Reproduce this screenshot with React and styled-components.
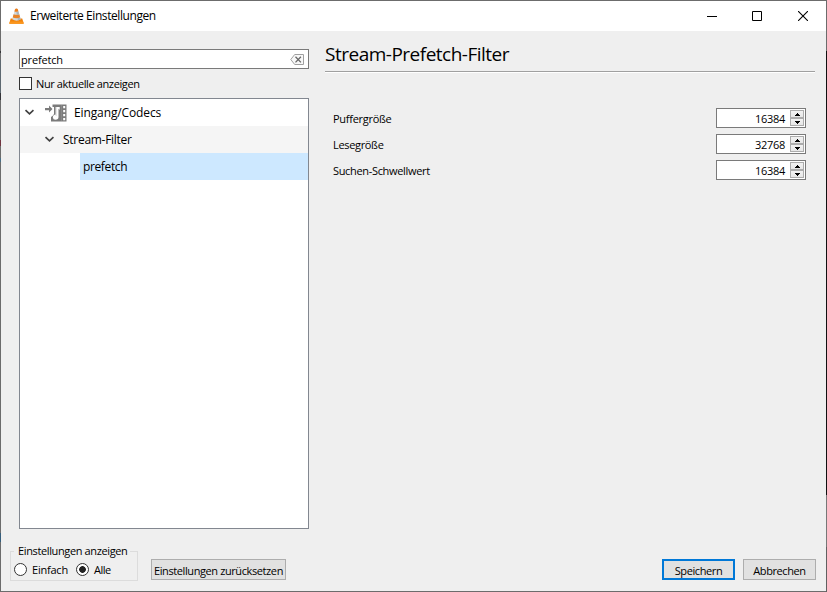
import React from 'react';
import styled, { createGlobalStyle } from 'styled-components';

const GlobalStyle = createGlobalStyle`
  * { box-sizing: border-box; }
  body { margin: 0; overflow: hidden; }
`;

const Window = styled.div`
  width: 827px;
  height: 592px;
  display: grid;
  grid-template-columns: 1px 1fr 1px;
  grid-template-rows: 1px 30px 1fr 1px;
  background: #6c6c6c;
  color: #000;
  font: 11px/14px 'Open Sans', 'Noto Sans', sans-serif;
  white-space: nowrap;
`;

const EdgeLeft = styled.div`
  grid-column: 1;
  grid-row: 1 / -1;
  background: linear-gradient(#6c6c6c 0 51px, #343438 51px 53px, #6c6c6c 53px 60px, #5d6870 60px 93px, #343438 93px 100px, #6c6c6c 100px 140px, #70333f 140px 146px, #6c6c6c 146px 158px, #4a6e84 158px 162px, #6c6c6c 162px 533px, #365e7c 533px 542px, #6c6c6c 542px);
`;

const EdgeRight = styled.div`
  grid-column: 3;
  grid-row: 1 / -1;
  background: linear-gradient(#6c6c6c 0 51px, #101010 51px 495px, #777 495px 547px, #606060 547px);
`;

const TitleBar = styled.header`
  grid-column: 2;
  grid-row: 2;
  display: flex;
  align-items: center;
  background: #fff;
  padding-left: 8px;
`;

const Label = styled.span`
  font-size: ${(p) => p.$size || 11}px;
  letter-spacing: ${(p) => p.$track}px;
`;

const WindowTitle = styled(Label)`
  flex: 1;
  margin-left: 6px;
  line-height: 16px;
`;

const Controls = styled.div`
  display: flex;
  height: 100%;
`;

const ControlButton = styled.button`
  width: ${(p) => p.$w}px;
  padding: 0 0 1px;
  border: 0;
  background: none;
  display: flex;
  align-items: center;
  justify-content: center;
`;

const Content = styled.main`
  grid-column: 2;
  grid-row: 3;
  background: #efefef;
  display: grid;
  grid-template-columns: 290px 490px;
  grid-template-rows: 480px auto;
  column-gap: 16px;
  padding: 18px 11px 0 18px;
`;

const Sidebar = styled.aside`
  display: flex;
  flex-direction: column;
`;

const SearchField = styled.div`
  height: 20px;
  border: 1px solid #7a7a7a;
  background: #fff;
  display: flex;
  align-items: center;
  justify-content: space-between;
  padding: 2px 4px 0 1px;
`;

const CheckRow = styled.label`
  display: flex;
  align-items: center;
  gap: 4px;
  height: 13px;
  margin: 8px 0;
`;

const CheckBox = styled.span`
  width: 13px;
  height: 13px;
  border: 1px solid #333;
  background: #fff;
`;

const Tree = styled.div`
  flex: 1;
  border: 1px solid #828790;
  background: #fff;
`;

const TreeRow = styled.div`
  height: 27px;
  display: flex;
  align-items: center;
  padding-left: ${(p) => p.$indent}px;
  background: ${(p) => (p.$alternate ? '#f5f5f5' : '#fff')};
`;

const Chevron = styled.svg`
  width: 10px;
  height: 7px;
  margin-right: ${(p) => p.$gap}px;
`;

const TreeLabel = styled(Label)`
  line-height: 16px;
`;

const Selected = styled.div`
  flex: 1;
  height: 100%;
  display: flex;
  align-items: center;
  padding: 1px 0 0 3px;
  background: #cde8ff;
`;

const CategoryIcon = styled.svg`
  width: 22px;
  height: 18px;
  margin-right: 7px;
`;

const Panel = styled.section`
  display: flex;
  flex-direction: column;
`;

const Heading = styled.h1`
  height: 23px;
  margin: 0 0 1px;
  border-bottom: 1px solid #a0a0a0;
  box-shadow: 0 1px #fff;
  font-size: 19px;
  font-weight: 400;
  line-height: 10px;
  letter-spacing: -0.5px;
`;

const Settings = styled.div`
  display: flex;
  flex-direction: column;
  gap: 6px;
  padding: 35px 9px 0 8px;
`;

const SettingRow = styled.div`
  display: flex;
  align-items: center;
  justify-content: space-between;
  height: 20px;
  line-height: 12px;
`;

const SettingLabel = styled(Label)`
  padding-top: 2px;
`;

const SpinBox = styled.div`
  width: 90px;
  height: 20px;
  border: 1px solid #7a7a7a;
  background: #fff;
  display: flex;
  align-items: center;
  justify-content: flex-end;
`;

const SpinValue = styled(Label)`
  padding: 2px 5px 0 0;
`;

const Steppers = styled.div`
  display: grid;
  grid-template-rows: 8px 8px;
  width: 15px;
  padding-right: 1px;
`;

const Stepper = styled.span`
  display: flex;
  align-items: center;
  justify-content: center;
  border: 1px solid #acacac;
  background: linear-gradient(#f2f2f2, #e7e7e7);
`;

const Footer = styled.footer`
  grid-column: 1 / -1;
  display: flex;
  align-items: flex-start;
  padding-top: 15px;
  margin: 0 -1px 0 -9px;
`;

const Group = styled.fieldset`
  width: 128px;
  height: 37px;
  margin: 0;
  padding: 0 0 0 3px;
  min-width: 0;
  border: 1px solid #dcdcdc;
`;

const Legend = styled.legend`
  padding: 0 2px 0 4px;
  height: 14px;
  line-height: 14px;
`;

const Radios = styled.div`
  display: flex;
  align-items: center;
  height: 13px;
  margin-top: 5px;
`;

const Radio = styled.span`
  width: 13px;
  height: 13px;
  margin-right: 5px;
  border: 1px solid #333;
  border-radius: 50%;
  background: ${(p) => (p.$on ? 'radial-gradient(circle, #222 0 3px, #fff 3.7px)' : '#fff')};
`;

const RadioLabel = styled(Label)`
  margin-right: 8px;
  padding-top: 1px;
`;

const Button = styled.button`
  width: ${(p) => p.$w}px;
  height: 21px;
  margin: 15px 0 0 ${(p) => p.$ml}px;
  padding: 2px 0 0;
  border: ${(p) => (p.$primary ? '2px solid #0078d7' : '1px solid #adadad')};
  background: #e1e1e1;
  color: #000;
  font: inherit;
  line-height: ${(p) => (p.$primary ? 14 : 16)}px;
  letter-spacing: -0.4px;
`;

const Spacer = styled.div`
  flex: 1;
`;

function Cone() {
  return (
    <svg width="15" height="16" viewBox="0 0 15 16">
      <path d="M1.7 10.5H13.2L14.7 15.2Q14.6 15.8 14 15.8H1Q.3 15.8.3 15.2Z" fill="#f0820c" />
      <path d="M1 13.4H14L14.7 15.2Q14.6 15.8 14 15.8H1Q.3 15.8.3 15.2Z" fill="#fb961c" />
      <path d="M6.1 1Q7.5-.1 8.7 1L11.7 11.3Q7.5 14 3.3 11.3Z" fill="#d3d9db" />
      <path d="M6.1 1Q7.5-.1 8.7 1L9.4 3.4Q7.5 4.3 5.4 3.4Z" fill="#ee7d19" />
      <path d="M4.6 6.2Q7.5 7.4 10.3 6.2L11.2 9.4Q7.5 10.9 3.7 9.4Z" fill="#e88327" />
      <path d="M7.3 3.9L9.5 3.5L10.3 6.2L8 6.9ZM8.4 10.2L11.2 9.4L11.7 11.3L9 12.5Z" fill="#aeb6bb" />
    </svg>
  );
}

function ClearIcon() {
  return (
    <svg width="14" height="12" viewBox="0 0 14 12">
      <path d="M4.7.5H13.5V10.5H4.7L.8 5.5Z" fill="#f8f8f8" stroke="#a0a0a0" />
      <path d="M5.5 2.8L10.9 8.4M10.9 2.8L5.5 8.4" stroke="#666" strokeWidth="1.3" />
    </svg>
  );
}

function CodecIcon() {
  return (
    <CategoryIcon viewBox="0 0 22 18">
      <path d="M0 4H4V1.6L7.5 5L4 8.4V6.2H0Z" fill="#7b7b7b" />
      <path
        fillRule="evenodd"
        d="M7.5 .5H21.5V17.5H6V13Q8.5 11.5 9 10V3H7.5ZM11 3V10.5Q8 10.8 7.8 13.2Q8 15.8 10.4 15.8Q13.5 15.6 13.5 13V4.8Q14.2 5 14.7 6V3ZM18.2 2V4.2H20.2V2ZM18.2 6V8.2H20.2V6ZM18.2 10V12.2H20.2V10ZM18.2 14V16.2H20.2V14Z"
        fill="#7b7b7b"
      />
      <path d="M10.5 3H12V12H10.5Z" fill="#e8e8e8" />
      <path d="M16.5 1V17" stroke="#8f8f8f" strokeWidth=".7" />
    </CategoryIcon>
  );
}

function Expander({ gap }) {
  return (
    <Chevron $gap={gap} viewBox="0 0 10 7">
      <path d="M1.5 1.1L5.5 4.8L9.5 1.1" fill="none" stroke="#404040" strokeWidth="1.7" />
    </Chevron>
  );
}

function Arrow({ down }) {
  return (
    <svg width="5" height="3" viewBox="0 0 5 3" shapeRendering="crispEdges">
      <path d={down ? 'M0 0H5V1H4V2H3V3H2V2H1V1H0Z' : 'M2 0H3V1H4V2H5V3H0V2H1V1H2Z'} />
    </svg>
  );
}

const settings = [
  { label: 'Puffergröße', track: -0.28, value: '16384' },
  { label: 'Lesegröße', track: -0.33, value: '32768' },
  { label: 'Suchen-Schwellwert', track: -0.33, value: '16384' },
];

export default function App() {
  return (
    <>
      <GlobalStyle />
      <Window>
        <EdgeLeft />
        <EdgeRight />
        <TitleBar>
          <Cone />
          <WindowTitle $size={12} $track={-0.42}>Erweiterte Einstellungen</WindowTitle>
          <Controls>
            <ControlButton $w={45} aria-label="Minimieren">
              <svg width="10" height="10"><path d="M0 5.5H10" stroke="#000" /></svg>
            </ControlButton>
            <ControlButton $w={45} aria-label="Maximieren">
              <svg width="10" height="10"><path d="M.5 .5H9.5V9.5H.5Z" fill="none" stroke="#000" /></svg>
            </ControlButton>
            <ControlButton $w={47} aria-label="Schließen">
              <svg width="10" height="10"><path d="M0 0L10 10M10 0L0 10" stroke="#000" strokeWidth="1.1" /></svg>
            </ControlButton>
          </Controls>
        </TitleBar>
        <Content>
          <Sidebar>
            <SearchField>
              <Label $track={-0.17}>prefetch</Label>
              <ClearIcon />
            </SearchField>
            <CheckRow>
              <CheckBox />
              <Label $track={-0.38}>Nur aktuelle anzeigen</Label>
            </CheckRow>
            <Tree>
              <TreeRow $indent={4}>
                <Expander gap={11} />
                <CodecIcon />
                <TreeLabel $size={12} $track={-0.12}>Eingang/Codecs</TreeLabel>
              </TreeRow>
              <TreeRow $indent={24} $alternate>
                <Expander gap={9} />
                <TreeLabel $size={12} $track={-0.28}>Stream-Filter</TreeLabel>
              </TreeRow>
              <TreeRow $indent={60}>
                <Selected>
                  <TreeLabel $size={12} $track={-0.37}>prefetch</TreeLabel>
                </Selected>
              </TreeRow>
            </Tree>
          </Sidebar>
          <Panel>
            <Heading>Stream-Prefetch-Filter</Heading>
            <Settings>
              {settings.map((s) => (
                <SettingRow key={s.label}>
                  <SettingLabel $track={s.track}>{s.label}</SettingLabel>
                  <SpinBox>
                    <SpinValue $track={-0.28}>{s.value}</SpinValue>
                    <Steppers>
                      <Stepper><Arrow /></Stepper>
                      <Stepper><Arrow down /></Stepper>
                    </Steppers>
                  </SpinBox>
                </SettingRow>
              ))}
            </Settings>
          </Panel>
          <Footer>
            <Group>
              <Legend><Label $track={-0.37}>Einstellungen anzeigen</Label></Legend>
              <Radios>
                <Radio />
                <RadioLabel $track={-0.22}>Einfach</RadioLabel>
                <Radio $on />
                <RadioLabel $track={-0.45}>Alle</RadioLabel>
              </Radios>
            </Group>
            <Button $w={135} $ml={13}>Einstellungen zurücksetzen</Button>
            <Spacer />
            <Button $w={73} $ml={0} $primary>Speichern</Button>
            <Button $w={73} $ml={8}>Abbrechen</Button>
          </Footer>
        </Content>
      </Window>
    </>
  );
}
